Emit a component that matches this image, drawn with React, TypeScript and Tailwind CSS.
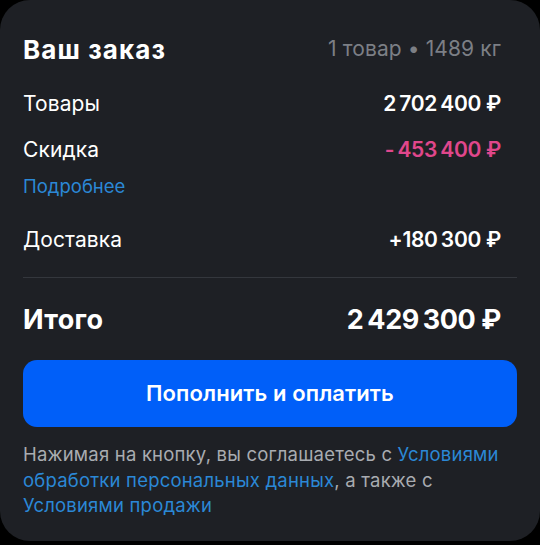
import React from "react";

const font = { fontFamily: "Inter, 'Noto Sans', sans-serif" };

function Row({ label, value, valueClass }: { label: string; value: string; valueClass: string }) {
  return (
    <div className="flex items-center justify-between h-[46px] pr-[16px]">
      <span className="text-[21px] text-white tracking-[0.1px]">{label}</span>
      <span className={`text-[21px] font-semibold tracking-[-0.3px] ${valueClass}`}>{value}</span>
    </div>
  );
}

export default function App() {
  return (
    <div className="w-[540px] h-[545px] bg-black" style={font}>
      <div className="w-[540px] h-[541px] bg-[#1e2025] rounded-[30px] px-[23px] pt-[30px] flex flex-col">
        {/* Header */}
        <div className="flex items-center justify-between h-[38px] pr-[16px]">
          <h1 className="text-[26px] font-bold text-white tracking-[1.1px]">Ваш заказ</h1>
          <span className="text-[21px] text-[#7c7f85] tracking-[0.1px]">1 товар • 1489 кг</span>
        </div>

        <div className="mt-[13px] flex flex-col">
          <Row label="Товары" value={"2\u2009702\u2009400 ₽"} valueClass="text-white" />
          <Row label="Скидка" value={"-\u2009453\u2009400 ₽"} valueClass="text-[#e0478c]" />
          <a className="text-[18.5px] text-[#2b88d6] leading-[26px]">Подробнее</a>
          <div className="mt-[18px]">
            <Row label="Доставка" value={"+180\u2009300 ₽"} valueClass="text-white" />
          </div>
        </div>

        <div className="h-px bg-[#34373d] mt-[14px]" />

        <div className="flex items-center justify-between h-[42px] mt-[21px] pr-[16px]">
          <span className="text-[27px] font-bold text-white tracking-[0.3px]">Итого</span>
          <span className="text-[27px] font-bold text-white tracking-[-0.4px]">{"2\u2009429\u2009300 ₽"}</span>
        </div>

        <button className="mt-[19px] h-[67px] w-full rounded-[14px] bg-[#005ff9] text-white text-[22px] font-semibold tracking-[0.1px]">
          Пополнить и оплатить
        </button>

        <p className="mt-[15px] text-[18.5px] leading-[25.5px] text-[#a9acb1] tracking-[0.2px]">
          Нажимая на кнопку, вы соглашаетесь с <span className="text-[#2b88d6]">Условиями обработки персональных данных</span>, а также с{" "}
          <span className="text-[#2b88d6]">Условиями продажи</span>
        </p>
      </div>
    </div>
  );
}
